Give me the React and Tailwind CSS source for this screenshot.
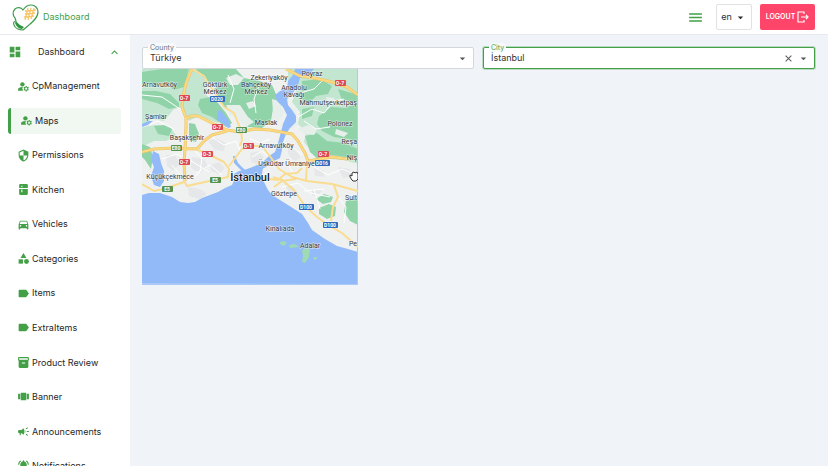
import React, { useState } from 'react'
import {
  MdDashboard, MdManageAccounts, MdSecurity, MdKitchen, MdDirectionsCar, MdCategory, MdLabel,
  MdInventory2, MdViewCarousel, MdCampaign, MdNotificationsActive, MdKeyboardArrowUp, MdMenu,
  MdArrowDropDown, MdClose,
} from 'react-icons/md'

const menu = [
  { name: 'CpManagement', icon: MdManageAccounts },
  { name: 'Maps', icon: MdManageAccounts },
  { name: 'Permissions', icon: MdSecurity },
  { name: 'Kitchen', icon: MdKitchen },
  { name: 'Vehicles', icon: MdDirectionsCar },
  { name: 'Categories', icon: MdCategory },
  { name: 'Items', icon: MdLabel },
  { name: 'ExtraItems', icon: MdLabel },
  { name: 'Product Review', icon: MdInventory2 },
  { name: 'Banner', icon: MdViewCarousel },
  { name: 'Announcements', icon: MdCampaign },
  { name: 'Notifications', icon: MdNotificationsActive },
]

const places = [
  { x: 0, y: 18, t: 'Arnavutköy', a: 'start' },
  { x: 73, y: 18, t: 'Göktürk' },
  { x: 73, y: 25, t: 'Merkez' },
  { x: 127, y: 11, t: 'Zekeriyaköy' },
  { x: 114, y: 18, t: 'Bahçeköy' },
  { x: 114, y: 25, t: 'Merkez' },
  { x: 170, y: 7, t: 'Poyraz' },
  { x: 152, y: 21, t: 'Anadolu' },
  { x: 152, y: 28, t: 'Kavağı' },
  { x: 215, y: 36, t: 'Mahmutşevketpaş', a: 'end' },
  { x: 14, y: 50, t: 'Şamlar' },
  { x: 124, y: 56, t: 'Maslak' },
  { x: 198, y: 57, t: 'Polonez' },
  { x: 45, y: 71, t: 'Başakşehir' },
  { x: 134, y: 79, t: 'Arnavutköy' },
  { x: 215, y: 75, t: 'Reşa', a: 'end' },
  { x: 215, y: 91, t: 'Niş', a: 'end' },
  { x: 129, y: 97, t: 'Üsküdar' },
  { x: 158, y: 97, t: 'Ümraniye' },
  { x: 28, y: 110, t: 'Küçükçekmece' },
  { x: 142, y: 127, t: 'Göztepe' },
  { x: 215, y: 131, t: 'Sult', a: 'end' },
  { x: 138, y: 162, t: 'Kınalıada' },
  { x: 168, y: 179, t: 'Adalar' },
  { x: 215, y: 177, t: 'Pe', a: 'end' },
]

const shields = [
  { x: 42, y: 29, t: 'O-7', c: '#dd4a56' },
  { x: 198, y: 14, t: 'O-7', c: '#dd4a56' },
  { x: 75, y: 58, t: 'O-7', c: '#dd4a56' },
  { x: 42, y: 93, t: 'O-7', c: '#dd4a56' },
  { x: 65, y: 85, t: 'O-3', c: '#dd4a56' },
  { x: 106, y: 77, t: 'O-1', c: '#dd4a56' },
  { x: 181, y: 85, t: 'O-7', c: '#dd4a56' },
  { x: 75, y: 30, t: 'D020', c: '#2f6cbd' },
  { x: 180, y: 94, t: 'D016', c: '#2f6cbd' },
  { x: 164, y: 138, t: 'D100', c: '#2f6cbd' },
  { x: 188, y: 156, t: 'D100', c: '#2f6cbd' },
  { x: 99, y: 61, t: 'E80', c: '#569150' },
  { x: 34, y: 79, t: 'E80', c: '#569150' },
  { x: 73, y: 111, t: 'E5', c: '#569150' },
  { x: 25, y: 120, t: 'E5', c: '#569150' },
]

const mainRoads = 'M50 0l-6 14-3 14-1 10 4 11 0 9-1 22-1 13 1 19M44 50l5-3 7 0 16 8 13 6 13 2 14-3 16 1 22 4 6 7 7 12 3 8 24-4 15 2 11-1M144 0l14 7 14 2 18 4 15 5 11 8M0 83l12-3 21-1 22 1 7-8 8-6 15-4'
const roads = 'M50 0l12 7 4 7 9 13 7 11 10 6 4 10 3 7 1 10-2 6M56 81l10 4 16 8 5 7-1 8-14 3-27 6-3-5M87 97l13-17 8-3 12 0 10 13 7 10 13 8 15 4 25 3 26 7M0 115l12 7 13-3 17-6M131 108l9 3 12 10 11 16 12 11 11 8 14 8 16 14M165 92l-1 20M120 109l16 2 7-6 12-1 5-5M132 118l8-6 14-2M192 116l4 12-5 10-2 14'

const Logo = () => (
  <svg viewBox="0 0 27 29" className="h-[29px] w-[27px]" fill="none" aria-hidden="true">
    <path d="M11 27C15 23 26 17 26 9c0-4-3-7-7-7-4 0-6 2-8 5C9 4 5 4 3 6c-3 3-2 7 0 9l1 3c-2 0-3 2-2 4 1 3 5 5 9 5z" stroke="#3f9b4b" strokeWidth="1.2" strokeLinejoin="round" />
    <path d="M4 18c2 3 5 5 8 6l-2 2c-3 0-6-3-7-6z" fill="#2f9440" />
    <path d="M16 5l-3 12M19 5l-3 12M22 5l-3 11M13 8l11-1M13 11l10-1M12 14l10-1" stroke="#f8c56a" strokeWidth="1.3" />
  </svg>
)

const CityMap = () => (
  <svg viewBox="0 0 216 216" className="block size-[216px]" role="img" aria-label="Map of İstanbul">
    <rect width="216" height="216" fill="#eff1f1" />
    {/* lighter countryside */}
    <g fill="#c3e6d0">
      <path d="M0 0h62l10 12-8 14 12 10 6 12-6 6-20-7-9 5-6-14-9 2-10 12-12-2-10 6z" />
      <path d="M146 0h70v95l-14-4-28-2-12-16 2-10-8-8 2-12-8-10 4-12-8-10z" />
      <path d="M0 58l14-2 14 2 6 8-10 6-12 0-12 6z" />
    </g>
    {/* forests */}
    <g fill="#90d3a9">
      <path d="M0 22l14 0 14 3 9 9 0 4-10 2-12-6-15-4zM0 3l20-3h27l-5 18-10 3-10-7-22 1z" />
      <path d="M54 0l40 0 8 9 16 3 12 4 6 14-5 10-2 12-9 7-14-1-6-6-7-8-9-4-8-11-6-11-6-7z" />
      <path d="M58 30l10-2 8 6 8 10 6 10-6 4-14-10-10-4-4-8zM47 54l6 1 4 10-3 8-7-2zM12 57l10-1 8 4-3 7-11-2z" />
      <path d="M177 47l12-9 14 1 13-5v39l-9-3-15-2-12-6-5-7z" />
      <path d="M163 67l12-3 10 8 17 2 14 6v11l-12-3-14-2-14 4-8-7z" />
      <path d="M160 12l18-2 12 7-4 8-12 2-9 9-6-8zM196 20l20 6v8l-16-3zM160 40l12-2-2 9-10 3z" />
      <path d="M174 130l8-5 9 3-2 5-8 2zM177 139l10-4 7 3-1 9-8 3-8-5zM204 132l12-3v27l-8-4-6-9z" />
      <path d="M0 75l8 3 3 10-2 12-6-9-3-3z" />
    </g>
    {/* settlements inside the forest */}
    <g fill="#e6efea">
      <path d="M84 9l10-4 8 4-6 7-8 0zM62 16l9-3 4 5-8 5zM104 34l7-2 3 5-7 3zM146 37l7 3 2 16-6 4zM184 28l8 1 2 5-8 2zM156 60l10-4 9 4-3 6-10-1zM194 60l12 4-4 4-9-3z" />
      <path d="M84 36l14 0 8 12 6 5-8 5-8-8-8-4zM130 30l7 2 5 12-8 12-5-3 2-10z" />
    </g>
    {/* built-up shading */}
    <g fill="#e5e7e9">
      <path d="M50 88l12 2 4 8-8 6-9-5zM68 96l9-3 6 6-6 6-8-3zM66 72l8-3 10 5-2 8-9-1zM46 118l12 2 7 5-8 5-10-3zM108 84l8-2 6 6-6 8-7-3zM146 78l8 2 5 9-7 3-6-7zM24 86l9 0 5 9-7 7-6-5zM142 114l8 3 5 8-6 2zM170 120l10 1-3 5-7 1zM196 98l12 2 2 7-9 2zM172 98l10 4 0 6-9-1z" />
    </g>
    {/* streets */}
    <g fill="none" stroke="#fff" strokeWidth="1">
      <path d="M0 26l20 2 18 12M20 90l15-5 16 8 16 10M48 77l12 12-2 14-12 10M54 104l14-8 12 10M70 68l12 8 12-4 5 12M92 90l8-10M108 70l10 4 10-4M30 96l10 12M110 88l10-6 8 6M144 92l8 14M150 78l10 8M172 98l14 8 14-6 10 4M140 118l16-4 12 10 20 4M172 120l6 20M162 122l20-2M196 128l8 10-2 16" />
      <path d="M156 48l14-8 12 4 10-12 10-2M158 24l14-4 8-8M162 52l12 8 14-2M86 6l6 14-4 14M118 14l-6 16 2 14M0 58l16-6 16 8" />
    </g>
    {/* sea, lakes and the strait */}
    <g fill="#92b9f8">
      <path d="M0 126l7-2h11l12 4 8 5 8 1 7-1 7-4 8-3 8-3 7-4 7-3 3-7-1-4 5-3 5-1 6-2 7-3 6 2-1 7 0 4 3 6 3 6 4 5 8 5 8 5 14 9 6 9 4 7 13 9 12 7 11 3 10 3v36H0z" />
      <path d="M148 0h24l-6 6-8 3-2 7-5 8-6 6 1 6 4 5 4 6 0 6-6 6-4 6-3 8-1 8-2 8-8 4-6 5-10 5-6 1 2-5 9-4 8-8 6-4 3-9 3-11 2-8 4-9-4-8-6-6-2-6 5-4 7-3 1-7 5-6 2-6z" />
      <path d="M11 82l6 3 2 9 3 8 0 10-4 6-6-2-3-9 3-9-3-7zM76 42l3-1 3 5 4 4 3 8-3 1-5-5-6-3zM0 55l6-3 5 0-5 4-6 2z" />
      <path d="M91 87l2 0 3 7 6 6 5 4-3 2-6-6-6-6z" />
    </g>
    <g fill="#9edab5">
      <path d="M138 173l4-1 3 2-3 3-4-2zM147 176l4-1 4 1 2 2-9 1zM160 181l5-2 3 1-1 8-4 6-3-1 1-6zM172 188l3 0-1 3-3-1z" />
    </g>
    <path d="M0 214v2h216V0h-1v215z" fill="#a9c9f7" />
    {/* main roads */}
    <path d={mainRoads} fill="none" stroke="#e9c062" strokeWidth="3" strokeLinejoin="round" />
    <path d={roads} fill="none" stroke="#f9dc90" strokeWidth="2" strokeLinejoin="round" />
    <path d={mainRoads} fill="none" stroke="#fbd982" strokeWidth="2" strokeLinejoin="round" />
    <g className="font-['Roboto',sans-serif]">
      {shields.map((s, i) => (
        <g key={i}>
          <rect x={s.x - (s.t.length > 3 ? 7 : 5)} y={s.y - 3} width={s.t.length > 3 ? 15 : 11} height="6" rx="1" fill={s.c} />
          <text x={s.x} y={s.y + 2} textAnchor="middle" fill="#fff" className="text-[5px] font-bold">{s.t}</text>
        </g>
      ))}
      {places.map((p, i) => (
        <text key={i} x={p.x} y={p.y} textAnchor={p.a || 'middle'} fill="#33373b" stroke="#fff" strokeOpacity="0.7" strokeWidth="1" paintOrder="stroke" className="text-[7px]">{p.t}</text>
      ))}
      <text x="108" y="112" textAnchor="middle" fill="#17191c" stroke="#fff" strokeWidth="1" paintOrder="stroke" className="text-[11px] font-medium">İstanbul</text>
    </g>
    {/* grab cursor */}
    <path d="M210 111l-2-3 0-2 2 1 0-3 2-1 1 1 2-1 1 2 0 5-2 2h-3z" fill="#fff" stroke="#333" strokeWidth="1" strokeLinejoin="round" />
  </svg>
)

const Field = ({ id, label, value, onChange, active }) => (
  <div className={`relative flex h-[22px] flex-1 items-center rounded-[2px] border bg-white pr-1 pl-[7px] ${active ? 'border-[#43a047] ring-1 ring-[#43a047]/30' : 'border-[#d3d7dc]'}`}>
    <label htmlFor={id} className={`absolute -top-[5px] left-[5px] rounded-sm bg-[#f7fafc] px-0.5 text-[7px] leading-[9px] ${active ? 'text-[#43a047]' : 'text-[#6b7280]'}`}>{label}</label>
    <input id={id} value={value} autoFocus={active} onChange={(e) => onChange(e.target.value)} className="min-w-0 flex-1 bg-transparent text-[9px] leading-3 text-[#333] outline-none" />
    {active && (
      <button type="button" aria-label="Clear" className="mr-[3px] text-[#555]" onClick={() => onChange('')}>
        <MdClose size={11} />
      </button>
    )}
    <button type="button" aria-label={`Open ${label}`} className="text-[#555]">
      <MdArrowDropDown size={13} />
    </button>
  </div>
)

const App = () => {
  const [county, setCounty] = useState('Türkiye')
  const [city, setCity] = useState('İstanbul')

  return (
    <div className="flex h-screen flex-col overflow-hidden bg-[#f0f4f9] font-['Inter','Liberation_Sans',sans-serif] text-[#2b2b2b]">
      <header className="flex h-[35px] shrink-0 items-center border-b border-[#e6e9ed] bg-white pr-[13px] pl-3">
        <a href="#" className="flex items-center gap-1 text-[9px] text-[#43a047]">
          <Logo />
          Dashboard
        </a>
        <div className="ml-auto flex items-center">
          <button type="button" aria-label="Toggle menu" className="mr-3 text-[#43a047]"><MdMenu size={17} /></button>
          <button type="button" className="mr-2 flex h-[26px] w-9 items-center justify-center gap-0.5 rounded-[2px] border border-[#dfe2e5] text-[9px]">
            en
            <MdArrowDropDown size={13} />
          </button>
          <button type="button" className="flex h-[26px] w-[55px] items-center justify-center gap-0.5 rounded-[2px] bg-[#ff4569] text-[7px] font-semibold text-white">
            LOGOUT
            <svg viewBox="0 0 12 12" className="size-3" fill="none" stroke="currentColor" strokeWidth="1.2" aria-hidden="true">
              <path d="M7 3V1H1v10h6V9M4 6h7M9 4l2 2-2 2" />
            </svg>
          </button>
        </div>
      </header>

      <div className="flex min-h-0 flex-1">
        <aside className="w-[130px] shrink-0 overflow-hidden bg-white pr-[9px] pl-2">
          <button type="button" className="flex h-[34px] w-full items-center text-[9px]">
            <MdDashboard size={14} className="mr-4 text-[#43a047]" />
            Dashboard
            <MdKeyboardArrowUp size={13} className="ml-auto text-[#43a047]" />
          </button>
          <nav className="mt-1 flex h-[406px] flex-col justify-between">
            {menu.map(({ name, icon: Icon }) => (
              <a key={name} href="#" className={`flex h-[26px] shrink-0 items-center gap-0.5 rounded-[3px] text-[9px] text-[#1f1f1f] ${name === 'Maps' ? 'border-l-[3px] border-[#43a047] bg-[#f0f8f1] pl-[9px]' : 'pl-[9px]'}`}>
                <Icon size={13} className="text-[#43a047]" />
                {name}
              </a>
            ))}
          </nav>
        </aside>

        <main className="min-w-0 flex-1 pt-3 pr-[13px] pl-3">
          <div className="flex gap-[9px]">
            <Field id="county" label="County" value={county} onChange={setCounty} />
            <Field id="city" label="City" value={city} onChange={setCity} active />
          </div>
          <CityMap />
        </main>
      </div>
    </div>
  )
}

export default App
